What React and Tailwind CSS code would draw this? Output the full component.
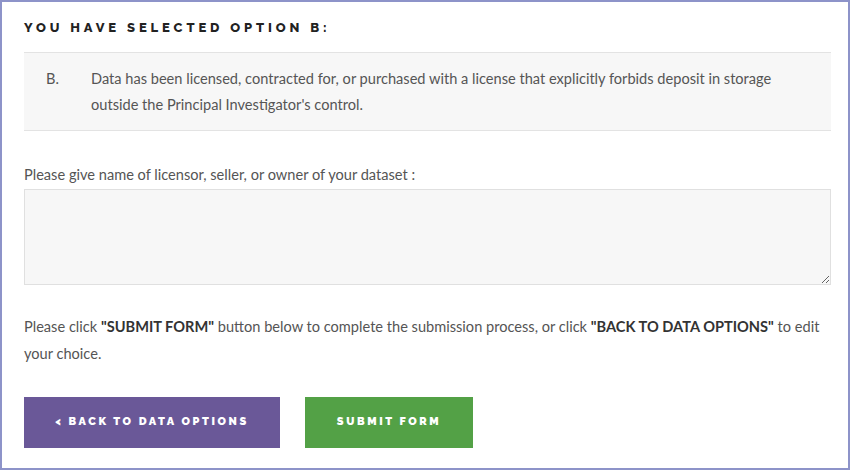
export default function App() {
  const body = "font-['Source_Sans_Pro',Lato,sans-serif]"
  return (
    <div className={`w-[850px] h-[470px] border-2 border-[#8d93c9] bg-white ${body} text-[14.6px] text-[#555]`}>
      <div className="pl-[22px] pr-[17px] pt-[16px]">
        <h1 className="font-['Raleway',Lato,sans-serif] font-extrabold text-[13px] tracking-[3.9px] text-[#222] leading-[20px]">
          YOU HAVE SELECTED OPTION B:
        </h1>

        <div className="mt-[14px] bg-[#f7f7f7] border-y border-[#e3e3e3] flex pt-[13px] pb-[12px] leading-[26px]">
          <span className="w-[67px] pl-[22px] shrink-0">B.</span>
          <p className="pr-[36px]">
            Data has been licensed, contracted for, or purchased with a license that explicitly forbids deposit in storage
            outside the Principal Investigator's control.
          </p>
        </div>

        <label className="block mt-[32px] leading-[24px]">
          Please give name of licensor, seller, or owner of your dataset :
        </label>
        <textarea className="block mt-[2px] w-full h-[96px] bg-[#f7f7f7] border border-[#e0e0e0] outline-none" />

        <p className="mt-[28px] leading-[27px]">
          Please click <b className="text-[#333]">"SUBMIT FORM"</b> button below to complete the submission process, or click{' '}
          <b className="text-[#333]">"BACK TO DATA OPTIONS"</b> to edit your choice.
        </p>

        <div className="mt-[30px] flex gap-[25px] font-['Raleway',Lato,sans-serif] font-black text-[11px] tracking-[2.6px] text-white">
          <button className="w-[256px] h-[51px] bg-[#6a5898]">&lt; BACK TO DATA OPTIONS</button>
          <button className="w-[168px] h-[51px] bg-[#53a146]">SUBMIT FORM</button>
        </div>
      </div>
    </div>
  )
}
